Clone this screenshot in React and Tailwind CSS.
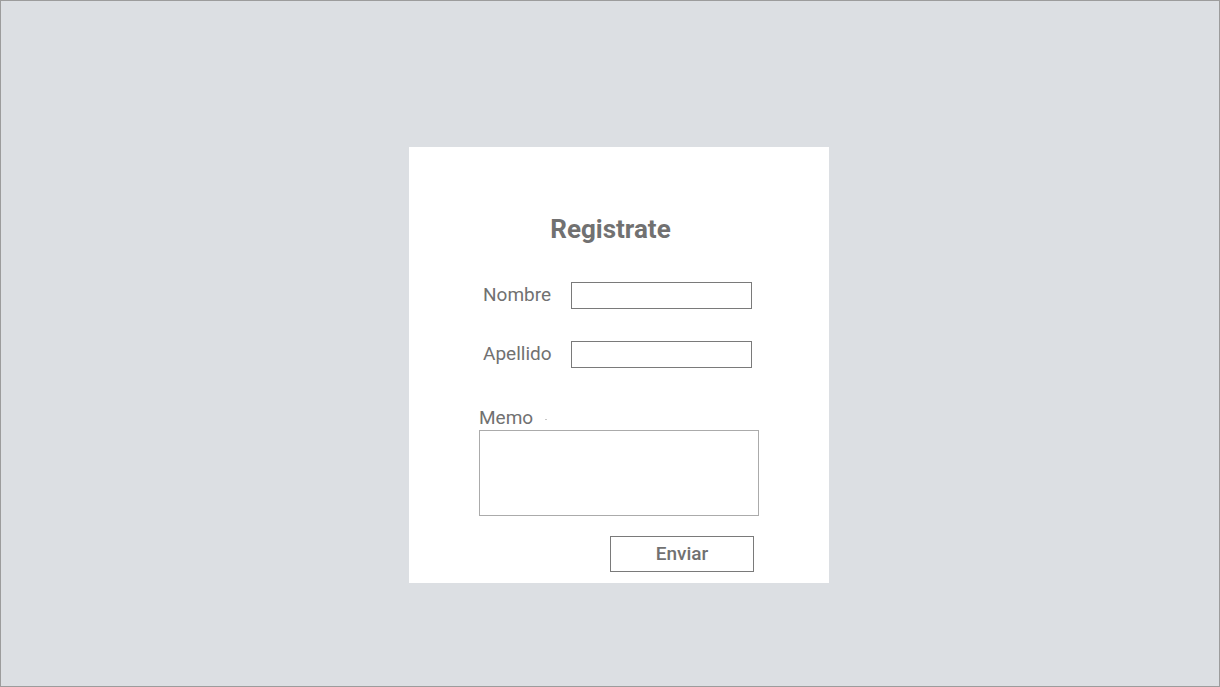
export default function App() {
  const font = { fontFamily: "Roboto, 'Liberation Sans', sans-serif" }
  return (
    <div className="w-[1220px] h-[687px] border border-[#9c9c9c] bg-[#dcdfe3] pt-[146px] pl-[408px]" style={font}>
      {/* CARD */}
      <div className="w-[420px] h-[436px] bg-white flex flex-col text-[#717171]">
        <h1 className="mt-[67px] pr-[17px] text-center text-[26px] leading-[30px] font-bold">Registrate</h1>

        <div className="mt-[38px] pl-[74px] flex items-start">
          <label className="w-[88px] text-[19px] leading-[25px]">Nombre</label>
          <input type="text" className="w-[181px] h-[27px] border border-[#7a7a7a] outline-none" />
        </div>

        <div className="mt-[32px] pl-[74px] flex items-start">
          <label className="w-[88px] text-[19px] leading-[25px]">Apellido</label>
          <input type="text" className="w-[181px] h-[27px] border border-[#7a7a7a] outline-none" />
        </div>

        {/* MEMO */}
        <div className="mt-[38px] pl-[70px] flex items-center">
          <label className="text-[19px] leading-[24px]">Memo</label>
          <span className="ml-[12px] mt-[2px] w-[2px] h-[1px] bg-[#c8c8c8]" />
        </div>
        <div className="pl-[70px]">
          <textarea className="block w-[280px] h-[86px] border border-[#ababab] resize-none outline-none" />
        </div>

        <div className="mt-[20px] pl-[201px]">
          <button className="w-[144px] h-[36px] border border-[#7a7a7a] text-[19px] font-medium leading-[34px] text-center">
            Enviar
          </button>
        </div>
      </div>
    </div>
  )
}
